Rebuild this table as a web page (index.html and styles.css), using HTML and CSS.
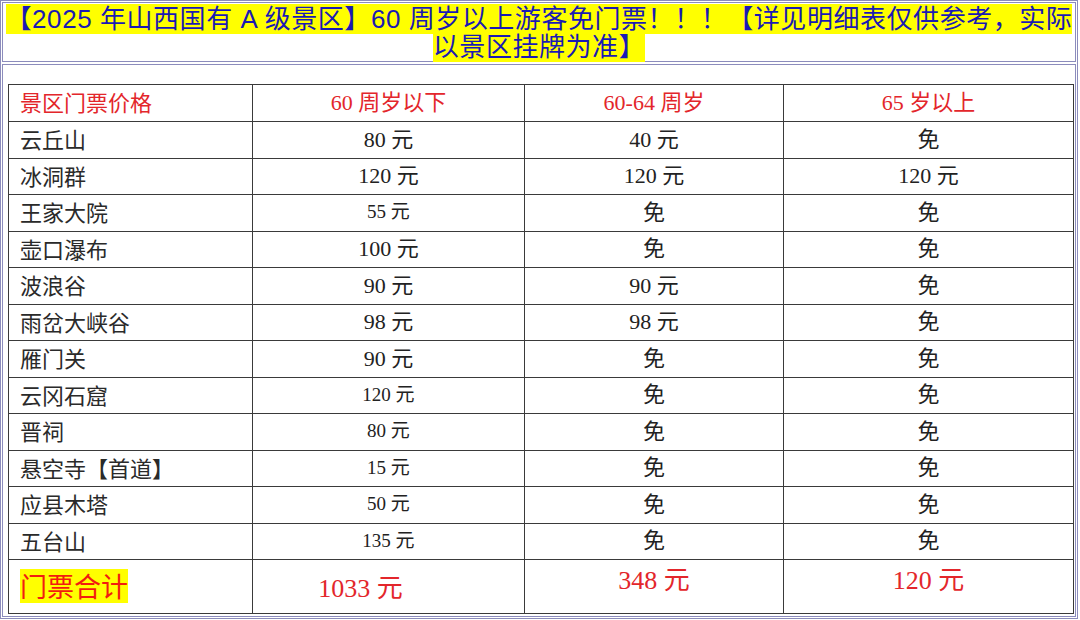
FILE: index.html
```html
<!DOCTYPE html>
<html lang="zh-CN">
<head>
<meta charset="utf-8">
<title>2025 年山西国有 A 级景区门票</title>
<link rel="stylesheet" href="styles.css">
</head>
<body>
<div class="frame">
  <div class="title-cell">
    <p class="title"><span class="hl">【2025 年山西国有 A 级景区】60 周岁以上游客免门票！！！【详见明细表仅供参考，实际</span><br><span class="hl">以景区挂牌为准】</span></p>
  </div>
  <div class="body-cell">
    <table class="prices">
      <colgroup>
        <col class="c1"><col class="c2"><col class="c3"><col class="c4">
      </colgroup>
      <tr class="head">
        <td class="name">景区门票价格</td>
        <td>60 周岁以下</td>
        <td>60-64 周岁</td>
        <td>65 岁以上</td>
      </tr>
      <tr><td class="name">云丘山</td><td>80 元</td><td>40 元</td><td>免</td></tr>
      <tr><td class="name">冰洞群</td><td>120 元</td><td>120 元</td><td>120 元</td></tr>
      <tr><td class="name">王家大院</td><td class="sm">55 元</td><td>免</td><td>免</td></tr>
      <tr><td class="name">壶口瀑布</td><td>100 元</td><td>免</td><td>免</td></tr>
      <tr><td class="name">波浪谷</td><td>90 元</td><td>90 元</td><td>免</td></tr>
      <tr><td class="name">雨岔大峡谷</td><td>98 元</td><td>98 元</td><td>免</td></tr>
      <tr><td class="name">雁门关</td><td>90 元</td><td>免</td><td>免</td></tr>
      <tr><td class="name">云冈石窟</td><td class="sm">120 元</td><td>免</td><td>免</td></tr>
      <tr><td class="name">晋祠</td><td class="sm">80 元</td><td>免</td><td>免</td></tr>
      <tr><td class="name">悬空寺【首道】</td><td class="sm">15 元</td><td>免</td><td>免</td></tr>
      <tr><td class="name">应县木塔</td><td class="sm">50 元</td><td>免</td><td>免</td></tr>
      <tr><td class="name">五台山</td><td class="sm">135 元</td><td>免</td><td>免</td></tr>
      <tr class="total">
        <td class="name"><span class="total-label">门票合计</span></td>
        <td class="sum-a">1033 元</td>
        <td class="sum-top">348 元</td>
        <td class="sum-top">120 元</td>
      </tr>
    </table>
  </div>
</div>
</body>
</html>
```

FILE: styles.css
```css
html, body {
  margin: 0;
  padding: 0;
  background: #ffffff;
}

.frame {
  width: 1078px;
  box-sizing: border-box;
  border: 1px solid #8c8cbc;
  padding: 1px;
  display: flex;
  flex-direction: column;
  gap: 2px;
}

.title-cell {
  border: 1px solid #8c8cbc;
  height: 60px;
  box-sizing: border-box;
  padding-top: 2px;
}

.title {
  margin: 0;
  text-align: center;
  white-space: nowrap;
  font-family: "Liberation Sans", "Noto Sans CJK SC", sans-serif;
  font-size: 26px;
  letter-spacing: 0.55px;
  line-height: 28px;
  color: #1a1ab4;
}

.hl {
  background: #ffff00;
}

.body-cell {
  border: 1px solid #8c8cbc;
  padding: 19px 2px 2px 5px;
}

.prices {
  border-collapse: collapse;
  table-layout: fixed;
  width: 1065px;
  font-family: "Liberation Serif", "Noto Sans CJK SC", serif;
  font-size: 22px;
  line-height: 1.2;
  color: #222222;
}

.c1 { width: 244px; }
.c2 { width: 272px; }
.c3 { width: 259px; }
.c4 { width: 290px; }

.prices td {
  border: 1px solid #3a3a3a;
  padding: 0;
  height: 35.5px;
  text-align: center;
  vertical-align: middle;
}

.prices td.name {
  text-align: left;
  padding: 0 0 3px 11px;
  height: 32.5px;
  font-family: "Noto Sans CJK SC", sans-serif;
  font-size: 22px;
  color: #2a2a2a;
}

.prices td.sm {
  font-size: 19px;
}

.prices .head td {
  height: 36px;
  color: #e3262b;
}

.prices .head td.name {
  height: 33px;
}

.prices .total td {
  height: 53px;
  color: #e3262b;
  font-size: 26px;
}

.prices .total td.name {
  height: 50px;
}

.total-label {
  display: inline-block;
  vertical-align: middle;
  background: #ffff00;
  color: #f21c10;
  font-size: 27px;
  line-height: 34px;
}

.prices .total td.sum-a {
  height: 49px;
  padding-right: 56px;
  padding-top: 4px;
}

.prices .total td.sum-top {
  height: 48px;
  vertical-align: top;
  padding-top: 5px;
}
```
